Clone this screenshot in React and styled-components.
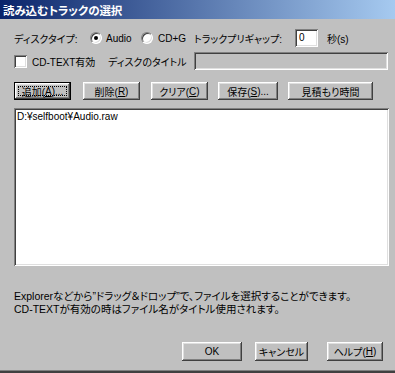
import React from 'react';
import styled, { createGlobalStyle } from 'styled-components';

const Global = createGlobalStyle`
	html, body {
		margin: 0;
		padding: 0;
		background: #c0c0c0;
	}
	* {
		box-sizing: border-box;
	}
`;

const Dialog = styled.div`
	width: 395px;
	height: 373px;
	background: #c0c0c0;
	display: flex;
	flex-direction: column;
	font-family: "Liberation Sans", "Noto Sans CJK JP", sans-serif;
	font-size: 10px;
	font-feature-settings: "palt";
	color: #000;
	border-bottom: 2px solid #404040;
	box-shadow: inset 0 -1px #808080;
`;

const TitleBar = styled.div`
	height: 19px;
	flex-shrink: 0;
	display: flex;
	align-items: center;
	padding-left: 3px;
	background: linear-gradient(to right, #0a246a, #a6caf0);
	color: #fff;
	font-weight: bold;
	font-size: 11.5px;
	letter-spacing: -0.1px;
`;

const Body = styled.div`
	flex: 1;
	display: flex;
	flex-direction: column;
	padding: 0 7px 10px 14px;
`;

const Row = styled.div`
	display: flex;
	align-items: center;
	height: 18px;
	margin-top: ${(p) => p.$top}px;
`;

const Label = styled.span`
	white-space: nowrap;
	margin-left: ${(p) => p.$ml || 0}px;
	width: ${(p) => (p.$w ? `${p.$w}px` : 'auto')};
	flex-shrink: 0;
`;

const Radio = styled.span`
	width: 12px;
	height: 12px;
	border-radius: 50%;
	flex-shrink: 0;
	background: #fff;
	border: 1px solid;
	border-color: #808080 #fff #fff #808080;
	box-shadow: inset 1px 1px #404040, inset -1px -1px #dfdfdf;
	margin-left: ${(p) => p.$ml || 0}px;
	display: flex;
	align-items: center;
	justify-content: center;
	&::after {
		content: '';
		width: 4px;
		height: 4px;
		border-radius: 50%;
		background: ${(p) => (p.$checked ? '#000' : 'transparent')};
	}
`;

const Check = styled.span`
	width: 13px;
	height: 13px;
	flex-shrink: 0;
	background: #fff;
	box-shadow: inset 1px 1px #808080, inset -1px -1px #fff, inset 2px 2px #404040, inset -2px -2px #dfdfdf;
`;

const Field = styled.div`
	width: ${(p) => p.$w}px;
	height: 18px;
	flex-shrink: 0;
	margin-left: ${(p) => p.$ml || 0}px;
	background: ${(p) => (p.$disabled ? '#c0c0c0' : '#fff')};
	box-shadow: inset 1px 1px #808080, inset -1px -1px #fff, inset 2px 2px #404040, inset -2px -2px #dfdfdf;
	padding: 3px 0 0 4px;
	font-size: 10px;
	line-height: 12px;
`;

const ButtonRow = styled.div`
	display: flex;
	align-items: center;
	margin-top: ${(p) => p.$top || 0}px;
	justify-content: ${(p) => (p.$end ? 'flex-end' : 'flex-start')};
	padding-right: ${(p) => (p.$end ? 5 : 0)}px;
`;

const Button = styled.button`
	position: relative;
	width: ${(p) => p.$w}px;
	height: ${(p) => p.$h || 18}px;
	margin-left: ${(p) => p.$ml || 0}px;
	flex-shrink: 0;
	padding: 0;
	background: #c0c0c0;
	font: inherit;
	font-size: 10px;
	color: #000;
	border: ${(p) => (p.$default ? '1px solid #000' : 'none')};
	box-shadow: inset -1px -1px #404040, inset 1px 1px #fff, inset -2px -2px #808080, inset 2px 2px #dfdfdf;
	display: flex;
	align-items: center;
	justify-content: center;
	white-space: nowrap;
	&::after {
		content: '';
		display: ${(p) => (p.$focus ? 'block' : 'none')};
		position: absolute;
		inset: 3px;
		border: 1px dotted #000;
	}
`;

const ListBox = styled.div`
	margin-top: 8px;
	width: 375px;
	height: 158px;
	background: #fff;
	box-shadow: inset 1px 1px #808080, inset -1px -1px #fff, inset 2px 2px #404040, inset -2px -2px #dfdfdf;
	padding: 3px 3px;
`;

const ListItem = styled.div`
	line-height: 12px;
	white-space: nowrap;
`;

const Help = styled.div`
	margin-top: 24px;
	font-size: 10.5px;
	line-height: 13px;
	white-space: nowrap;
	flex: 1;
`;

export default function App() {
	return (
		<>
			<Global />
			<Dialog>
				<TitleBar>読み込むトラックの選択</TitleBar>
				<Body>
					<Row $top={10}>
						<Label $w={63}>ディスクタイプ:</Label>
						<Radio $ml={13} $checked />
						<Label $ml={4} $w={25}>Audio</Label>
						<Radio $ml={10} />
						<Label $ml={5} $w={26}>CD+G</Label>
						<Label $ml={10} $w={93}>トラックプリギャップ:</Label>
						<Field $ml={8} $w={23}>0</Field>
						<Label $ml={9}>秒(s)</Label>
					</Row>
					<Row $top={5}>
						<Check />
						<Label $ml={5} $w={66}>CD-TEXT有効</Label>
						<Label $ml={10} $w={79}>ディスクのタイトル</Label>
						<Field $ml={7} $w={194} $disabled />
					</Row>
					<ButtonRow $top={12}>
						<Button $w={57} $default $focus>
							追加(<u>A</u>)...
						</Button>
						<Button $w={57} $ml={12}>
							削除(<u>R</u>)
						</Button>
						<Button $w={57} $ml={11}>
							クリア(<u>C</u>)
						</Button>
						<Button $w={60} $ml={10}>
							保存(<u>S</u>)...
						</Button>
						<Button $w={85} $ml={10}>
							見積もり時間
						</Button>
					</ButtonRow>
					<ListBox>
						<ListItem>D:¥selfboot¥Audio.raw</ListItem>
					</ListBox>
					<Help>
						Explorerなどから”ドラッグ＆ドロップ”で、ファイルを選択することができます。
						<br />
						CD-TEXTが有効の時はファイル名がタイトル使用されます。
					</Help>
					<ButtonRow $end>
						<Button $w={60} $h={19}>
							OK
						</Button>
						<Button $w={53} $h={19} $ml={13}>
							キャンセル
						</Button>
						<Button $w={56} $h={19} $ml={19}>
							ヘルプ(<u>H</u>)
						</Button>
					</ButtonRow>
				</Body>
			</Dialog>
		</>
	);
}
